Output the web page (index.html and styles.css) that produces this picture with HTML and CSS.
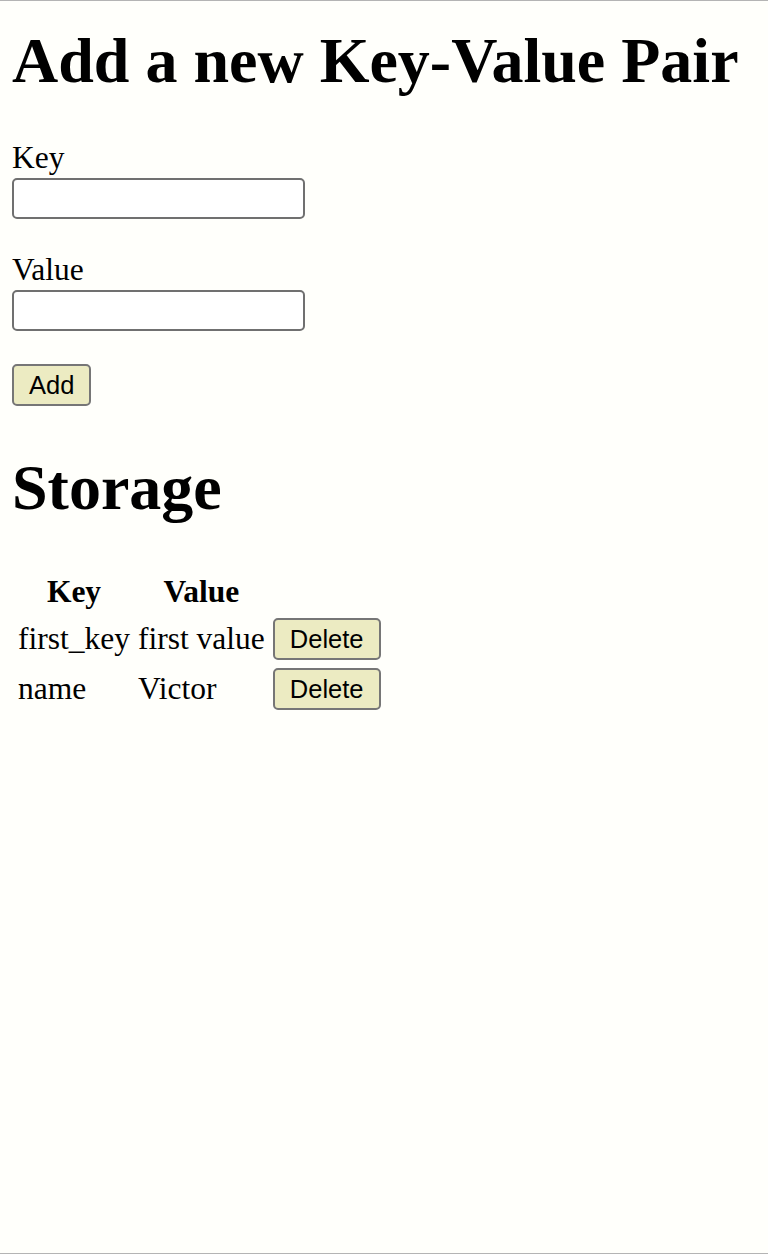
FILE: index.html
```html
<!DOCTYPE html>
<html lang="en">
<head>
<meta charset="utf-8">
<title>Key-Value Storage</title>
<link rel="stylesheet" href="styles.css">
</head>
<body>
<h1 class="title">Add a new Key-Value Pair</h1>
<form class="form">
  <div class="field">
    <label class="label" for="key">Key</label>
    <input class="input" id="key" type="text">
  </div>
  <div class="field">
    <label class="label" for="value">Value</label>
    <input class="input" id="value" type="text">
  </div>
  <div class="actions">
    <button class="btn" type="button">Add</button>
  </div>
</form>
<h1 class="title storage-title">Storage</h1>
<table class="table">
  <thead>
    <tr><th class="th">Key</th><th class="th">Value</th><th class="th"></th></tr>
  </thead>
  <tbody>
    <tr><td class="td">first_key</td><td class="td">first value</td><td class="td"><button class="btn" type="button">Delete</button></td></tr>
    <tr><td class="td">name</td><td class="td">Victor</td><td class="td"><button class="btn" type="button">Delete</button></td></tr>
  </tbody>
</table>
</body>
</html>
```
FILE: styles.css
```css
html {
  min-height: 100%;
  box-sizing: border-box;
  border-top: 1px solid #b4b4b4;
  border-bottom: 1px solid #b4b4b4;
  background: #fffffb;
}
body {
  margin: 0;
  padding: 0 12px;
  font-family: "Liberation Serif", "Times New Roman", serif;
  font-size: 31.5px;
  line-height: 36px;
  color: #000;
}
.title {
  font-size: 64px;
  line-height: 73px;
  font-weight: bold;
  margin: 23px 0 43px;
}
.storage-title {
  margin: 45px 0 44px;
}
.form {
  display: flex;
  flex-direction: column;
  align-items: flex-start;
  gap: 33px;
  margin: 0;
}
.field {
  display: flex;
  flex-direction: column;
  align-items: flex-start;
  gap: 2px;
}
.label {
  display: block;
}
.input {
  box-sizing: border-box;
  width: 293px;
  height: 41px;
  border: 2px solid #707070;
  border-radius: 5px;
  background: #fff;
  margin: 0;
  padding: 0 6px;
  font-size: 25px;
}
.btn {
  box-sizing: border-box;
  height: 42px;
  padding: 0 15px;
  margin: 0;
  border: 2px solid #767676;
  border-radius: 5px;
  background: #ecebc2;
  font-family: "Liberation Sans", Arial, sans-serif;
  font-size: 25.5px;
  line-height: 38px;
  color: #000;
}
.table {
  border-collapse: separate;
  border-spacing: 4px;
  margin-left: 0;
}
.th, .td {
  padding: 2px;
  vertical-align: middle;
}
.th {
  font-weight: bold;
  text-align: center;
}
.td {
  text-align: left;
}
```
